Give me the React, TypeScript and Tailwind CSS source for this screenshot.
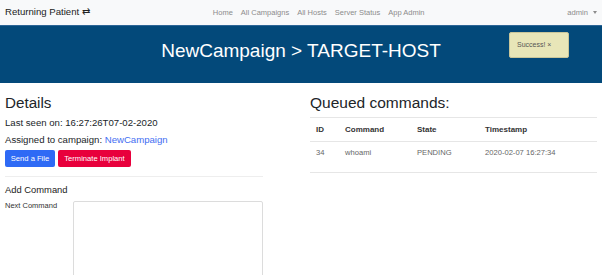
const NAV_LINKS = ['Home', 'All Campaigns', 'All Hosts', 'Server Status', 'App Admin'];

const COMMANDS = [
  { id: 34, command: 'whoami', state: 'PENDING', timestamp: '2020-02-07 16:27:34' },
];

export default function App() {
  return (
    <div className="h-[275px] overflow-hidden bg-white font-['Liberation_Sans',Arial,sans-serif] text-[#212529]">
      <nav className="flex h-[25px] items-center bg-[#f8f9fa] px-[5px]">
        <span className="text-[9.6px] text-[#222]">Returning Patient ⇄</span>
        <div className="ml-[123px] flex gap-[8px] text-[7.5px] text-[#8c8c8c]">
          {NAV_LINKS.map((l) => (
            <span key={l}>{l}</span>
          ))}
        </div>
        <div className="ml-auto flex items-center gap-[5px] text-[7.6px] text-[#8c8c8c]">
          admin
          <span className="inline-block border-x-[2.5px] border-t-[3px] border-x-transparent border-t-[#8c8c8c]" />
        </div>
      </nav>

      <header className="relative flex h-[58px] items-center justify-center border-t border-[#2d6596] bg-[#03497a] pb-[7px]">
        <h1 className="text-[19px] leading-[24px] text-white">NewCampaign &gt; TARGET-HOST</h1>
        <div className="absolute left-[509px] top-[6px] flex h-[26px] w-[60px] items-center rounded-[2px] border border-[#c9c69a] bg-[#e8e6b8] pl-[7px] text-[7px] text-[#555]">
          Success! ×
        </div>
      </header>

      <main className="flex gap-[47px] px-[5px] pt-[10px]">
        <section className="w-[258px] shrink-0">
          <h2 className="text-[15.2px] leading-[20px]">Details</h2>
          <p className="mt-[3px] text-[9.6px] leading-[14px]">Last seen on: 16:27:26T07-02-2020</p>
          <p className="mt-[3px] text-[9.6px] leading-[14px]">
            Assigned to campaign: <span className="text-[#3f6ef2]">NewCampaign</span>
          </p>
          <div className="mt-[3px] flex gap-[3px]">
            <button className="h-[17px] w-[50px] rounded-[2px] bg-[#2e6af5] text-[7.6px] text-white">
              Send a File
            </button>
            <button className="h-[17px] w-[73px] rounded-[2px] bg-[#e8003c] text-[7.6px] text-white">
              Terminate Implant
            </button>
          </div>
          <hr className="mt-[9px] border-[#eeeeee]" />
          <h3 className="mt-[6px] text-[9.4px] leading-[13px] text-[#222]">Add Command</h3>
          <div className="mt-[5px] flex">
            <label className="w-[68px] text-[7.5px] leading-[10px] text-[#333]">Next Command</label>
            <textarea className="h-[90px] flex-1 resize-none rounded-[2px] border border-[#dcdcdc]" />
          </div>
        </section>

        <section className="flex-1">
          <h2 className="text-[15.5px] leading-[20px]">Queued commands:</h2>
          <table className="mt-[4px] w-full border-collapse text-left">
            <thead>
              <tr className="h-[24px] border-y border-[#e6e6e6] text-[8px] text-[#333]">
                <th className="pl-[6px] font-bold">ID</th>
                <th className="font-bold">Command</th>
                <th className="font-bold">State</th>
                <th className="font-bold">Timestamp</th>
              </tr>
            </thead>
            <tbody>
              {COMMANDS.map((c) => (
                <tr key={c.id} className="h-[31px] border-b border-[#e6e6e6] align-top text-[7.6px] leading-[10px] text-[#666]">
                  <td className="w-[35px] pl-[6px] pt-[6px]">{c.id}</td>
                  <td className="w-[72px] pt-[6px]">{c.command}</td>
                  <td className="w-[68px] pt-[6px]">{c.state}</td>
                  <td className="pt-[6px]">{c.timestamp}</td>
                </tr>
              ))}
            </tbody>
          </table>
        </section>
      </main>
    </div>
  );
}
